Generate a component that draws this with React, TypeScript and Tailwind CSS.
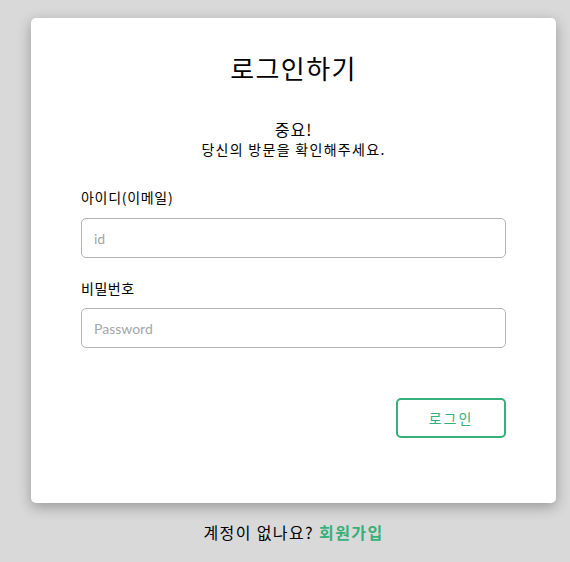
import React from "react";

const kr = { fontFamily: '"Noto Sans CJK KR", Lato, sans-serif' };

export default function App() {
  return (
    <div
      className="min-h-[562px] w-full bg-[#d9d9d9] pt-[18px] text-black"
      style={{ fontFamily: 'Lato, "Noto Sans CJK KR", sans-serif' }}
    >
      <div className="mx-[31px] w-[525px] h-[485px] rounded-[5px] bg-white px-[50px] pt-[32px] shadow-[0_4px_14px_rgba(0,0,0,0.3)]">
        <h1 className="text-center text-[26px] leading-[36px] tracking-[1.4px]" style={kr}>로그인하기</h1>
        <div className="mt-[33px] text-center" style={kr}>
          <div className="text-[16px] leading-[20px] tracking-[1px]">중요!</div>
          <div className="text-[14px] leading-[20px] tracking-[1.3px]">당신의 방문을 확인해주세요.</div>
        </div>
        <label className="mt-[28px] block text-[14px] leading-[20px] tracking-[0.7px]" style={kr}>아이디(이메일)</label>
        <input
          className="mt-[11px] block h-[40px] w-full rounded-[5px] border border-[#b3b3b3] px-[12px] text-[14px] outline-none placeholder:text-[#a6a6a6]"
          placeholder="id"
        />
        <label className="mt-[20px] block text-[14px] leading-[20px] tracking-[0.5px]" style={kr}>비밀번호</label>
        <input
          type="password"
          className="mt-[10px] block h-[40px] w-full rounded-[5px] border border-[#b3b3b3] px-[12px] text-[14px] outline-none placeholder:text-[#a6a6a6]"
          placeholder="Password"
        />
        <div className="mt-[50px] flex justify-end">
          <button className="h-[40px] w-[110px] rounded-[5px] border-2 border-[#36b07a] bg-white text-[14px] tracking-[2px] text-[#36b07a]" style={kr}>
            로그인
          </button>
        </div>
      </div>
      <div className="mx-[31px] mt-[18px] w-[525px] text-center text-[16px] leading-[22px] tracking-[1.4px]" style={kr}>
        계정이 없나요? <span className="font-bold text-[#36b07a]">회원가입</span>
      </div>
    </div>
  );
}
